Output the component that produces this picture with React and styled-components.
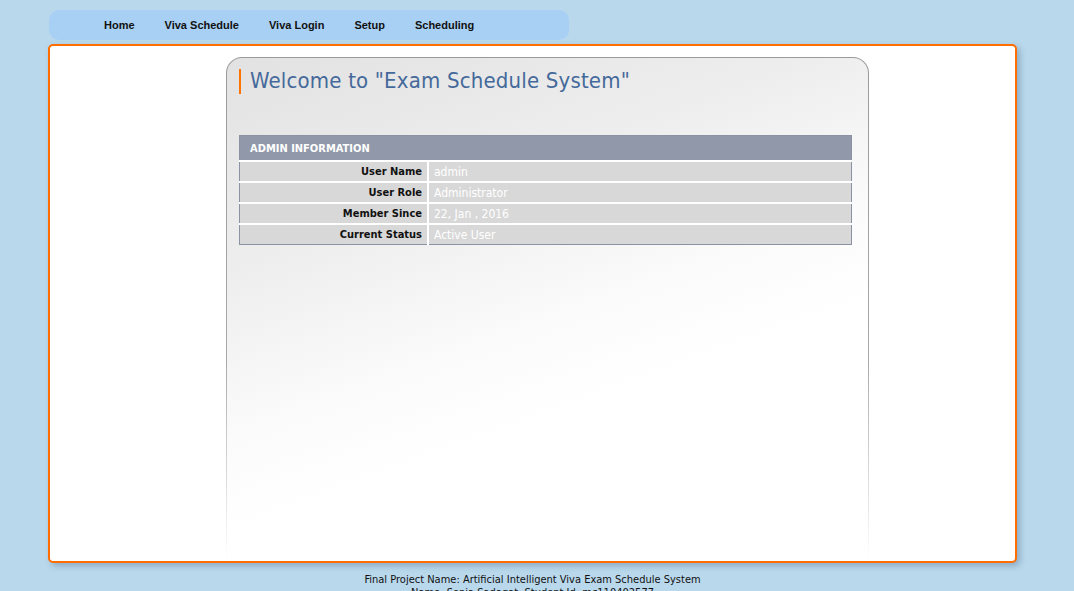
import React from "react";
import styled, { createGlobalStyle } from "styled-components";

const GlobalStyle = createGlobalStyle`
  html, body {
    margin: 0;
    padding: 0;
    background-color: #b9d8ec;
  }
  body {
    font-family: "DejaVu Sans Condensed", "DejaVu Sans", sans-serif;
  }
`;

const Page = styled.div`
  width: 969px;
  margin-left: 48px;
  padding-top: 10px;
`;

const NavBar = styled.ul`
  display: flex;
  list-style: none;
  margin: 0 0 4px 1px;
  padding: 0 0 0 40px;
  width: 480px;
  height: 30px;
  align-items: center;
  background-color: #a8d0f4;
  border-radius: 10px;
`;

const NavItem = styled.li`
  padding: 0 15px;
  font-family: "Liberation Sans", Arial, sans-serif;
  font-size: 11px;
  font-weight: bold;
  color: #111;
`;

const Container = styled.div`
  background-color: #fff;
  border: 2px solid #ff6c00;
  border-radius: 5px;
  box-shadow: 3px 3px 6px rgba(60, 90, 120, 0.35);
  padding: 11px 0 0 176px;
  box-sizing: border-box;
  height: 519px;
`;

const PanelFrame = styled.div`
  width: 643px;
  height: 503px;
  padding: 1px 1px 0;
  box-sizing: border-box;
  border-radius: 16px 16px 0 0;
  background: linear-gradient(to bottom, #9a9a9a 0%, #a8a8a8 60%, rgba(255, 255, 255, 0) 100%);
`;

const Panel = styled.div`
  height: 100%;
  border-radius: 15px 15px 0 0;
  background: linear-gradient(160deg, #e2e2e2 0%, #eeeeee 30%, #fbfbfb 52%, #ffffff 65%);
  padding: 11px 16px 0 12px;
  box-sizing: border-box;
`;

const Title = styled.h1`
  margin: 0;
  padding-left: 9px;
  border-left: 2px solid #ff7300;
  font-size: 22px;
  font-weight: normal;
  letter-spacing: 0.18px;
  line-height: 24px;
  padding-bottom: 1px;
  color: #44699a;
`;

const InfoTable = styled.table`
  margin-top: 41px;
  width: 613px;
  border-collapse: collapse;
  border: 1px solid #8a92a3;
  font-size: 11px;
`;

const HeadCell = styled.th`
  background-color: #9198a9;
  color: #fff;
  text-align: left;
  font-weight: bold;
  height: 23px;
  padding: 1px 10px 0;
  border-bottom: 2px solid #fff;
`;

const Row = styled.tr`
  background-color: #d8d8d8;
  border-bottom: ${({ $last }) => ($last ? "none" : "2px solid #fff")};
`;

const Label = styled.td`
  width: 182px;
  text-align: right;
  font-weight: bold;
  color: #111;
  height: 19px;
  padding: 0 5px 0 0;
  border-right: 2px solid #fff;
`;

const Value = styled.td`
  color: #ffffff;
  font-size: 12px;
  padding: 0 5px;
`;

const Footer = styled.div`
  text-align: center;
  font-size: 11px;
  color: #111;
  line-height: 13px;
  padding-top: 10px;
`;

const rows = [
  ["User Name", "admin"],
  ["User Role", "Administrator"],
  ["Member Since", "22, Jan , 2016"],
  ["Current Status", "Active User"],
];

const App = () => {
  return (
    <>
      <GlobalStyle />
      <Page>
        <NavBar>
          <NavItem>Home</NavItem>
          <NavItem>Viva Schedule</NavItem>
          <NavItem>Viva Login</NavItem>
          <NavItem>Setup</NavItem>
          <NavItem>Scheduling</NavItem>
        </NavBar>
        <Container>
          <PanelFrame>
            <Panel>
              <Title>Welcome to "Exam Schedule System"</Title>
              <InfoTable>
                <thead>
                  <tr>
                    <HeadCell colSpan={2}>ADMIN INFORMATION</HeadCell>
                  </tr>
                </thead>
                <tbody>
                  {rows.map(([label, value], i) => (
                    <Row key={label} $last={i === rows.length - 1}>
                      <Label>{label}</Label>
                      <Value>{value}</Value>
                    </Row>
                  ))}
                </tbody>
              </InfoTable>
            </Panel>
          </PanelFrame>
        </Container>
        <Footer>
          Final Project Name: Artificial Intelligent Viva Exam Schedule System
          <br />
          Name: Sonia Sadaqat, Student Id: mc110402577
        </Footer>
      </Page>
    </>
  );
};

export default App;
